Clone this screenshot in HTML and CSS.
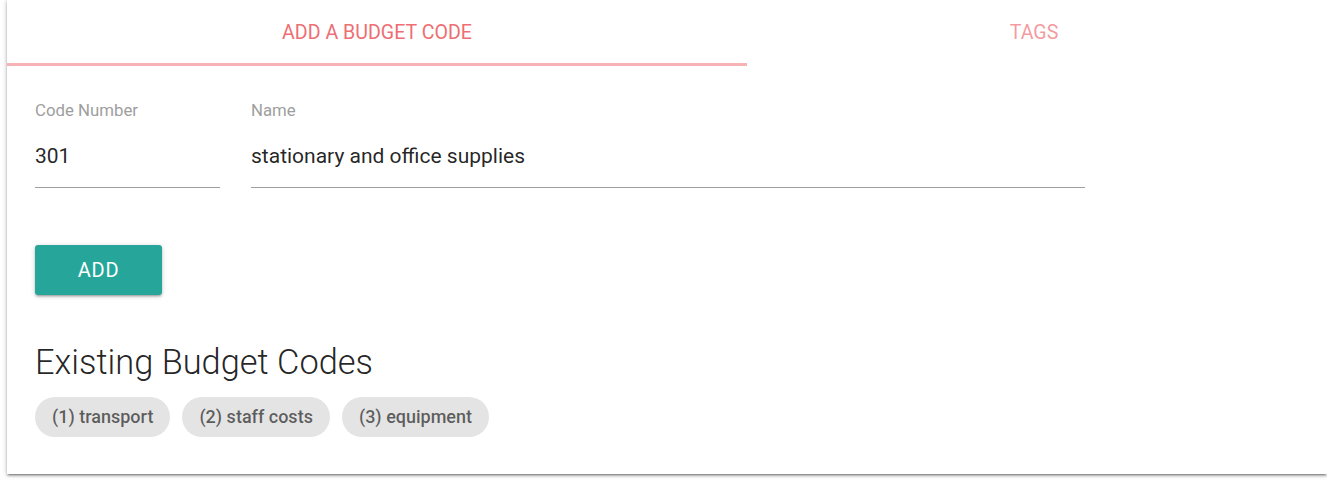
FILE: index.html
```html
<!DOCTYPE html>
<html>
<head>
<meta charset="utf-8">
<link rel="stylesheet" href="styles.css">
</head>
<body>
<div class="card">
  <div class="tabs">
    <div class="tab active">Add a budget code</div>
    <div class="tab second">Tags</div>
  </div>
  <div class="content">
    <div class="fields">
      <div class="field code">
        <label>Code Number</label>
        <div class="value">301</div>
      </div>
      <div class="field name">
        <label>Name</label>
        <div class="value">stationary and office supplies</div>
      </div>
    </div>
    <button class="btn">ADD</button>
    <h4 class="heading">Existing Budget Codes</h4>
    <div class="chips">
      <span class="chip">(1) transport</span>
      <span class="chip">(2) staff costs</span>
      <span class="chip">(3) equipment</span>
    </div>
  </div>
</div>
</body>
</html>
```

FILE: styles.css
```css
html {
  overflow: hidden;
}
html, body {
  margin: 0;
  padding: 0;
  background: #ffffff;
  height: 100%;
}
body {
  font-family: Roboto, "Liberation Sans", sans-serif;
  color: rgba(0,0,0,0.87);
}
.card {
  margin-left: 7px;
  width: 1320px;
  height: 474px;
  background: #fff;
  box-shadow: 0 2px 2px 0 rgba(0,0,0,0.2), 0 3px 1px -2px rgba(0,0,0,0.18), 0 1px 5px 0 rgba(0,0,0,0.25);
  box-sizing: border-box;
}
.tabs {
  display: flex;
  height: 66px;
}
.tab {
  text-align: center;
  text-transform: uppercase;
  font-size: 19.6px;
  line-height: 65px;
  height: 63px;
  color: rgba(238,110,115,0.7);
}
.tab.active {
  width: 740px;
  color: #ee6e73;
  border-bottom: 3px solid #f6b2b5;
}
.tab.second {
  width: 574px;
}
.content {
  padding: 0 28px;
}
.fields {
  display: flex;
  gap: 31px;
  padding-top: 34px;
}
.field label {
  display: block;
  font-size: 16.8px;
  color: #9e9e9e;
  line-height: 20px;
}
.field .value {
  font-size: 21px;
  line-height: 24px;
  padding: 24px 0 19px;
  border-bottom: 1px solid #9e9e9e;
}
.field.code { width: 185px; }
.field.name { width: 834px; }
.btn {
  display: block;
  margin-top: 57px;
  width: 127px;
  height: 50px;
  border: none;
  border-radius: 3px;
  background: #26a69a;
  color: #fff;
  font-family: Roboto, sans-serif;
  font-size: 20px;
  letter-spacing: 0.8px;
  box-shadow: 0 2px 2px 0 rgba(0,0,0,0.14), 0 3px 1px -2px rgba(0,0,0,0.12), 0 1px 5px 0 rgba(0,0,0,0.2);
  padding: 0;
}
.heading {
  margin: 46px 0 0;
  font-size: 34.4px;
  font-weight: 300;
  line-height: 42px;
}
.chips {
  display: flex;
  gap: 12px;
  margin-top: 14px;
}
.chip {
  height: 40px;
  line-height: 40px;
  padding: 0 17px;
  border-radius: 20px;
  background: #e4e4e4;
  color: rgba(0,0,0,0.6);
  font-size: 18px;
  font-weight: 500;
}
```
